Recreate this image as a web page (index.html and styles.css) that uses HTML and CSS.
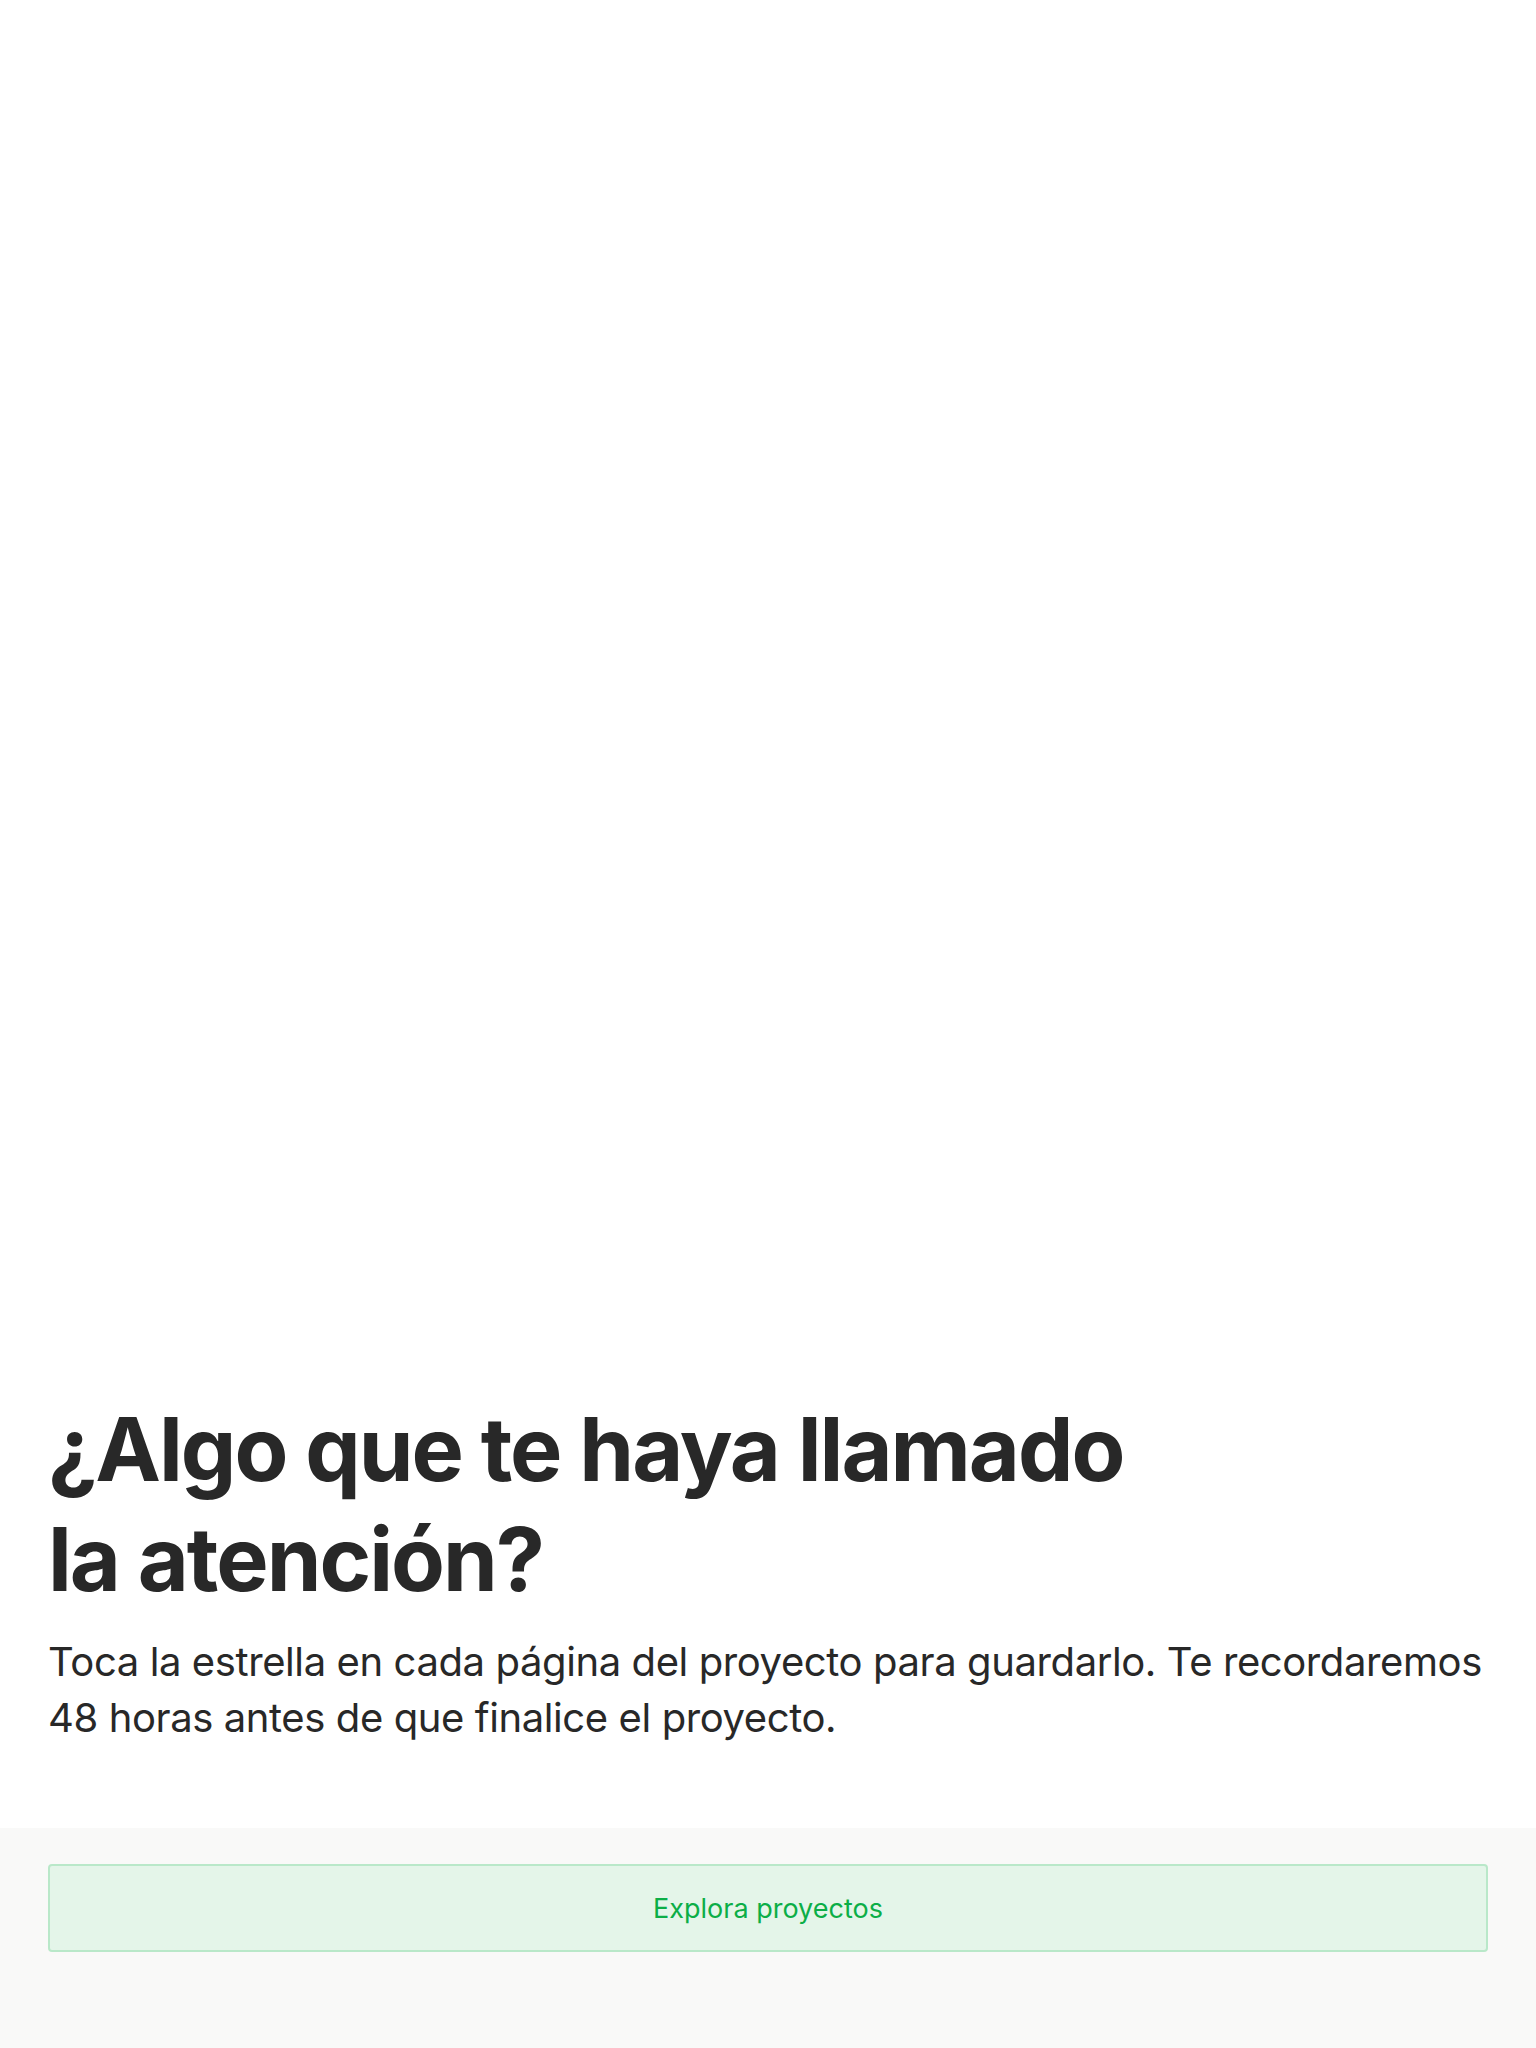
FILE: index.html
```html
<!DOCTYPE html>
<html lang="es">
<head>
<meta charset="utf-8">
<title>Proyectos guardados</title>
<link rel="stylesheet" href="styles.css">
</head>
<body>
<main class="page">
  <section class="hero">
    <h1 class="title">¿Algo que te haya llamado<br>la atención?</h1>
    <p class="lead">Toca la estrella en cada página del proyecto para guardarlo. Te recordaremos 48 horas antes de que finalice el proyecto.</p>
  </section>
  <footer class="actions">
    <button class="btn-explore" type="button">Explora proyectos</button>
  </footer>
</main>
</body>
</html>
```

FILE: styles.css
```css
html, body {
  margin: 0;
  padding: 0;
  background: #ffffff;
}

body {
  font-family: Inter, "Noto Sans", "Liberation Sans", sans-serif;
  color: #282828;
}

.page {
  min-height: 2048px;
  display: flex;
  flex-direction: column;
}

.hero {
  flex: 1;
  display: flex;
  flex-direction: column;
  justify-content: flex-end;
  padding: 0 48px 82px;
}

.title {
  margin: 0;
  font-size: 88px;
  line-height: 110px;
  font-weight: 700;
  letter-spacing: -2px;
  color: #282828;
}

.lead {
  margin: 20px 0 0;
  font-size: 40px;
  line-height: 56px;
  font-weight: 400;
  letter-spacing: -0.4px;
  color: #282828;
}

.actions {
  background: #f9f9f8;
  padding: 36px 48px 96px;
}

.btn-explore {
  display: block;
  width: 100%;
  height: 88px;
  box-sizing: border-box;
  border: 2px solid #b9e8c9;
  border-radius: 4px;
  background: #e4f5e9;
  color: #0cae47;
  font-family: Inter, "Noto Sans", "Liberation Sans", sans-serif;
  font-size: 27px;
  font-weight: 400;
  text-align: center;
  cursor: pointer;
}
```
